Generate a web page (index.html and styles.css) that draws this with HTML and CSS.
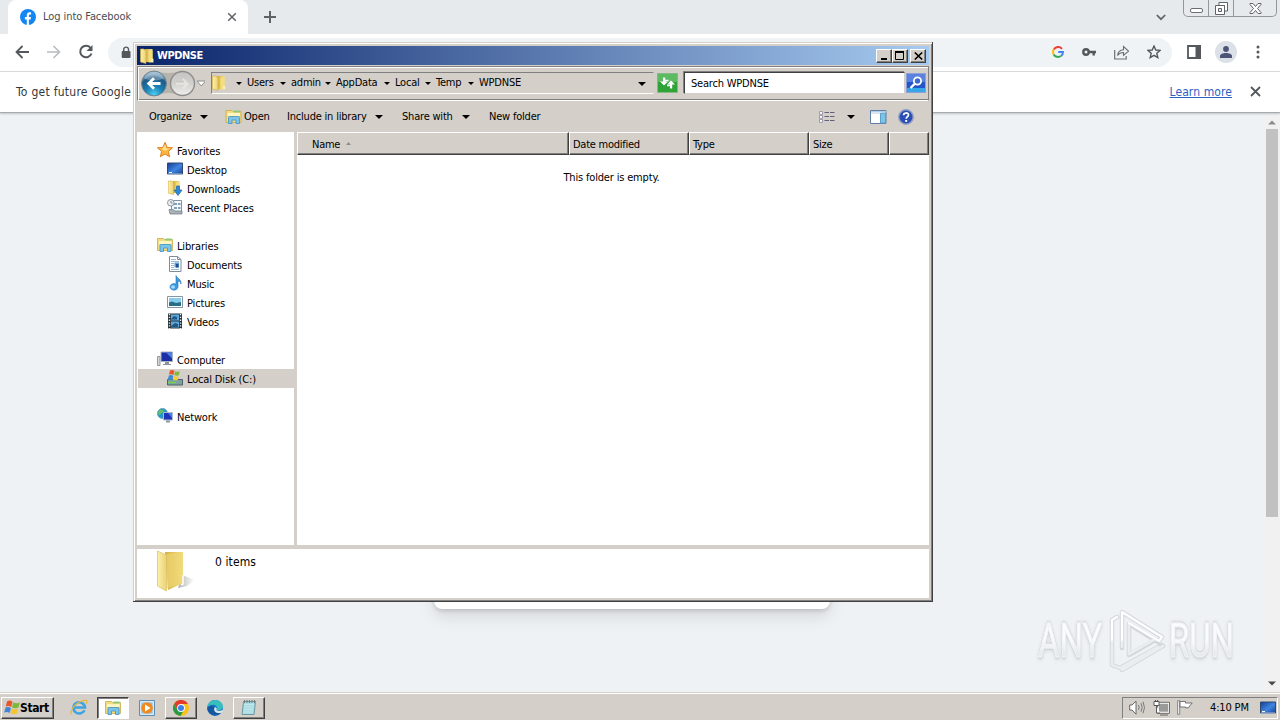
FILE: index.html
```html
<!DOCTYPE html>
<html lang="en">
<head>
<meta charset="utf-8">
<title>Log into Facebook</title>
<link rel="stylesheet" href="styles.css">
</head>
<body>
<svg class="defs" width="0" height="0" aria-hidden="true">
  <defs>
    <linearGradient id="goldBack" x1="0" x2="1"><stop offset="0" stop-color="#d5b044"/><stop offset="1" stop-color="#f3de7c"/></linearGradient>
    <linearGradient id="goldFront" x1="0" x2="1"><stop offset="0" stop-color="#fbf0ac"/><stop offset="1" stop-color="#ecd172"/></linearGradient>
    <linearGradient id="screen" x1="0" y1="0" x2="1" y2="1"><stop offset="0" stop-color="#143c98"/><stop offset=".55" stop-color="#3f86e0"/><stop offset="1" stop-color="#1a4196"/></linearGradient>
    <radialGradient id="orbBlue" cx=".5" cy=".95" r=".9"><stop offset="0" stop-color="#4fd0f4"/><stop offset=".4" stop-color="#1a7fb4"/><stop offset=".75" stop-color="#1f5a86"/><stop offset="1" stop-color="#a9c6d8"/></radialGradient>
    <linearGradient id="orbGrey" x1="0" y1="0" x2="0" y2="1"><stop offset="0" stop-color="#c4c4c4"/><stop offset=".5" stop-color="#d3d1cd"/><stop offset="1" stop-color="#f0efed"/></linearGradient>
    <linearGradient id="shade" x1="0" x2="1"><stop offset="0" stop-color="#777" stop-opacity=".6"/><stop offset="1" stop-color="#999" stop-opacity="0"/></linearGradient>
  </defs>
  <symbol id="folder" viewBox="0 0 16 16"><path d="M6 1h7.500v13H6z" fill="url(#goldBack)"/><path d="M1.500 1H5l2 2v12.500L1.500 14z" fill="url(#goldFront)" stroke="#d2ab3a" stroke-width=".6"/><path d="M9.500 2.500h4V10l1 1v3.500h-5z" fill="#f4df7e"/><path d="M13 11v3" stroke="#fff"/></symbol>
  <symbol id="library" viewBox="0 0 16 16"><path d="M.5 1.500h6l1 1h8v11H.5z" fill="#f3db80" stroke="#c9a84a" stroke-width=".8"/><path d="M8.500 1.500h6v2h-6z" fill="#8cc978"/><path d="M2 4h12.500v3H2z" fill="#fff5bf"/><path d="M3 14.500V8.500q0-1 1-1h9q1 0 1 1v6h-3.500v-3.500h-4v3.500z" fill="#7cc5ea" stroke="#3e92c4" stroke-width=".8"/></symbol>
  <symbol id="monitor" viewBox="0 0 16 16"><path d="M.5 2h15v11H.5z" fill="url(#screen)" stroke="#31486e"/><path d="M1 13h14" stroke="#aac4e0"/><path d="M2 11.500h3" stroke="#fff"/></symbol>
</svg>

<div class="screen">
  <div class="browser">
    <header class="tabstrip">
      <div class="tab">
        <svg class="fb" viewBox="0 0 16 16" width="16" height="16"><circle cx="8" cy="8" r="8" fill="#1386f5"/><path d="M6.800 16v-5.600H4.900V8h1.900V6.400c0-2.100 1.100-3.100 2.900-3.100.6 0 1.100.1 1.400.1v2h-1c-.9 0-1.200.5-1.200 1.200V8h2.100l-.4 2.400H8.900V16z" fill="#fff"/></svg>
        <span class="tab-title">Log into Facebook</span>
        <svg width="10" height="10" viewBox="0 0 10 10"><path d="M1.200 1.200l7.600 7.600M8.800 1.200l-7.600 7.600" stroke="#5f6368" stroke-width="1.500"/></svg>
      </div>
      <svg class="plus" width="12" height="12" viewBox="0 0 12 12"><path d="M6 0v12M0 6h12" stroke="#5f6368" stroke-width="2"/></svg>
      <svg class="tabsearch" width="10" height="7" viewBox="0 0 10 7"><path d="M.8 1L5 5.200 9.200 1" fill="none" stroke="#5f6368" stroke-width="1.700"/></svg>
      <div class="winctl">
        <span><svg class="min" width="13" height="5" viewBox="0 0 13 5"><rect x=".5" y=".5" width="12" height="4" rx="1.500" fill="#fff" stroke="#6b6f75"/></svg></span>
        <span><svg width="13" height="13" viewBox="0 0 13 13"><path d="M4 .5h8.500v8.500h-3V3.500H4z" fill="#fff" stroke="#5f6368"/><path d="M.5 3.500h9v9h-9z" fill="#fff" stroke="#5f6368"/><path d="M3.500 6.500h3v3h-3z" fill="#e7eaed" stroke="#5f6368"/></svg></span>
        <span class="wide"><svg width="13" height="11" viewBox="0 0 13 11"><path d="M1 .5h3l2.500 3L9 .5h3v1L8.500 5.500 12 9.500v1H9l-2.500-3-2.500 3H1v-1l3.500-4L1 1.500z" fill="#fff" stroke="#5f6368"/></svg></span>
      </div>
    </header>
    <div class="toolbar">
      <svg width="14" height="14" viewBox="0 0 14 14"><path d="M14 7H1.500M7.500 1L1.500 7l6 6" fill="none" stroke="#54585d" stroke-width="1.800"/></svg>
      <svg width="14" height="14" viewBox="0 0 14 14"><path d="M0 7h12.500M6.500 1l6 6-6 6" fill="none" stroke="#b9bcbf" stroke-width="1.600"/></svg>
      <svg class="reload" width="16" height="16" viewBox="0 0 16 16"><path d="M12.800 4.200A5.800 5.800 0 1 0 13.500 9.500" fill="none" stroke="#54585d" stroke-width="2"/><path d="M14.500 1v6h-6z" fill="#54585d"/></svg>
      <div class="omnibox">
        <svg class="lock" width="10" height="13" viewBox="0 0 10 13"><rect x=".7" y="5" width="8.800" height="7" rx="1" fill="#54585d"/><path d="M2.700 5V3.500a2.400 2.400 0 0 1 4.800 0V5" fill="none" stroke="#54585d" stroke-width="1.400"/></svg>
        <svg class="g" width="12" height="12" viewBox="0 0 12 12"><g fill="none" stroke-width="2"><path d="M10 2.800A5 5 0 0 0 1.700 3.600" stroke="#ea4335"/><path d="M1.700 3.600a5 5 0 0 0 0 4.800" stroke="#fbbc05"/><path d="M1.700 8.400A5 5 0 0 0 9 10" stroke="#34a853"/><path d="M9 10a5 5 0 0 0 2-4H6.200" stroke="#4285f4"/></g></svg>
        <svg width="14" height="8" viewBox="0 0 14 8"><circle cx="4" cy="4" r="2.700" fill="none" stroke="#54585d" stroke-width="2.400"/><path d="M7 4h7M11.700 4v3.500" fill="none" stroke="#54585d" stroke-width="2.400"/></svg>
        <svg width="15" height="15" viewBox="0 0 15 15"><path d="M.7 5v9h11.500v-3" fill="none" stroke="#6b6f75" stroke-width="1.200"/><path d="M3.500 10.500c.5-4 2.500-5.500 6-5.700V1.500l5 4.600-5 4.300V7.500c-3 0-4.700 1-6 3z" fill="none" stroke="#6b6f75" stroke-width="1.100"/></svg>
        <svg width="14" height="14" viewBox="0 0 14 14"><path d="M7 1l1.800 4 4.300.4-3.300 2.900 1 4.300L7 10.300l-3.800 2.300 1-4.300L.9 5.400 5.200 5z" fill="none" stroke="#54585d" stroke-width="1.400"/></svg>
      </div>
      <svg class="panel" width="14" height="14" viewBox="0 0 14 14"><path d="M1 1h12v12H1z" fill="#fff" stroke="#54585d" stroke-width="1.800"/><path d="M8.500 0H14v14H8.500z" fill="#54585d"/></svg>
      <span class="avatar"><svg width="12" height="12" viewBox="0 0 12 12"><circle cx="6" cy="3" r="2.900" fill="#4c5577"/><path d="M0 12v-2c0-2 3-3 6-3s6 1 6 3v2z" fill="#4c5577"/></svg></span>
      <svg class="menu" width="4" height="14" viewBox="0 0 4 14"><g fill="#54585d"><circle cx="2" cy="2" r="1.500"/><circle cx="2" cy="7" r="1.500"/><circle cx="2" cy="12" r="1.500"/></g></svg>
    </div>
    <div class="infobar">
      <span class="info-text">To get future Google</span>
      <a class="learn">Learn more</a>
      <svg width="11" height="11" viewBox="0 0 11 11"><path d="M1 1l9 9M10 1l-9 9" stroke="#54585d" stroke-width="1.800"/></svg>
    </div>
    <div class="page">
      <div class="page-body"><div class="card"></div></div>
      <div class="scrollbar">
        <svg width="8" height="5" viewBox="0 0 8 5"><path d="M0 4.500L4 .5l4 4z" fill="#8c8c8c"/></svg>
        <i class="thumb"></i>
        <svg width="8" height="5" viewBox="0 0 8 5"><path d="M0 .5h8l-4 4z" fill="#4a4a4a"/></svg>
      </div>
    </div>
  </div>

  <div class="watermark">
    <span class="wm any">ANY</span>
    <svg width="58" height="64" viewBox="0 0 58 64"><g fill="none" stroke-linejoin="round" stroke-linecap="round"><path d="M9 9L4 12v45l8 3 42-23M14 40V4l40 25-4 5-29-18v31l26-15M14 62l41-24" stroke="#d2d6da" stroke-width="4.500"/><path d="M9 9L4 12v45l8 3 38-21M14 39V4l40 25-3 4-30-18v31l26-15M14 62l41-24" stroke="#e9edf0" stroke-width="2.800"/><path d="M9 9L4 12v20M14 32V4l40 25-3 4-30-18" stroke="#fff" stroke-width="2"/></g></svg>
    <span class="wm run">RUN</span>
  </div>

  <section class="explorer">
    <div class="titlebar">
      <svg width="16" height="16"><use href="#folder"/></svg>
      <b>WPDNSE</b>
      <span class="cap first"><svg width="8" height="8" viewBox="0 0 8 8"><path d="M1 6h6v2H1z"/></svg></span>
      <span class="cap"><svg width="10" height="9" viewBox="0 0 10 9"><path d="M.5 1h8v7.500h-8z" fill="none" stroke="#000"/><path d="M0 0h9v2H0z"/></svg></span>
      <span class="cap last"><svg width="9" height="8" viewBox="0 0 9 8"><path d="M.8.5l7.400 7M8.200.5l-7.400 7" stroke="#000" stroke-width="1.600"/></svg></span>
    </div>
    <div class="navband">
      <svg class="orbs" width="67" height="30" viewBox="0 0 67 30">
        <path d="M16 2.500q14 5 28 0v25q-14-5-28 0z" fill="#b7b4ae"/>
        <circle cx="16" cy="15.500" r="12.400" fill="url(#orbBlue)" stroke="#70818c"/><path d="M6 10.500a11 9 0 0 1 20 0q-10 4-20 0z" fill="#fff" opacity=".28"/><path d="M22.500 15.500h-11M16 10.200l-5.300 5.300 5.300 5.300" fill="none" stroke="#fff" stroke-width="2.800"/>
        <circle cx="44.500" cy="15.500" r="12" fill="url(#orbGrey)" stroke="#8d8d8d" stroke-width="1.400"/><path d="M38 15.500h11M45 10.700l4.800 4.800-4.800 4.800" fill="none" stroke="#e6e5e2" stroke-width="2.600"/><path d="M38 14h8M45 9l6 6.500" fill="none" stroke="#bdbbb7" stroke-width=".7"/>
        <path d="M59 13h8.500l-4.200 5z" fill="#fff" stroke="#858585" stroke-width=".9"/>
      </svg>
      <div class="address">
        <svg class="afold" width="16" height="16"><use href="#folder"/></svg>
        <i class="dn c0"></i><span class="w1">Users</span><i class="dn"></i><span class="w2">admin</span><i class="dn"></i><span class="w3">AppData</span><i class="dn"></i><span class="w4">Local</span><i class="dn"></i><span class="w5">Temp</span><i class="dn"></i><span class="w6">WPDNSE</span>
        <i class="dn big"></i>
      </div>
      <svg class="refresh" width="21" height="20" viewBox="0 0 21 20"><path d="M.5.500h20v19H.5z" fill="#2fa336" stroke="#86b886"/><path d="M1 1h19v8H1z" fill="#7cc97d" opacity=".6"/><path d="M6 4.500h2.200v4H11L7 12.500 3 8.500h3z" fill="#fff"/><path d="M13 15.500h2.200v-4H18L14 7.500l-4 4h3z" fill="#fff"/><path d="M8 7.500h3.500M10 12.500h3" stroke="#fff" stroke-width="1.500"/></svg>
      <div class="search">Search WPDNSE</div>
      <svg width="20" height="20" viewBox="0 0 20 20"><path d="M.5.500h19v19H.5z" fill="#2455c8" stroke="#8ba0d8"/><path d="M1 1h18v8H1z" fill="#5b82de"/><path d="M1 15h18v4H1z" fill="#38a7e8"/><circle cx="11.500" cy="8" r="3.600" fill="#3c69cf" stroke="#fff" stroke-width="1.800"/><path d="M9 10.500L4.500 15" stroke="#fff" stroke-width="2.400"/></svg>
    </div>
    <div class="commands">
      <span class="k1">Organize</span><i class="dn big"></i>
      <svg class="openi" width="17" height="16"><use href="#library"/></svg><span class="k2">Open</span>
      <span class="k3">Include in library</span><i class="dn big"></i>
      <span class="k4">Share with</span><i class="dn big"></i>
      <span class="k5">New folder</span>
      <svg class="views" width="16" height="12" viewBox="0 0 16 12"><g fill="#fff" stroke="#8a87a0" stroke-width=".8"><path d="M.5.500h3v2.800h-3zM.5 4.500h3v2.800h-3zM.5 8.500h3v2.800h-3z"/></g><path d="M5.500 1.500H10M11 1.500h4.500M5.500 5.500H10M11 5.500h4.500M5.500 9.500H10M11 9.500h4.500" stroke="#625f7a"/></svg>
      <i class="dn big"></i>
      <svg class="preview" width="17" height="14" viewBox="0 0 17 14"><path d="M.5.500h15.500v13H.5z" fill="#fff" stroke="#5e7fa8"/><path d="M1 1.500h15M1 3h9" stroke="#b5cae3"/><path d="M10.500 3h5v10h-5z" fill="#7cc3e6" stroke="#5aa0c8"/></svg>
      <svg class="help" width="16" height="16" viewBox="0 0 16 16"><circle cx="8" cy="8" r="7.200" fill="#2a4fb4" stroke="#8f9bc4" stroke-width="1.500"/><path d="M5.600 6.300C5.600 3.200 10.600 3.300 10.500 6c0 1.700-2.300 1.700-2.300 3.800" fill="none" stroke="#fff" stroke-width="1.700"/><path d="M7.200 11h2v1.900h-2z" fill="#fff"/></svg>
    </div>
    <div class="panes">
      <nav class="tree">
        <div class="row top"><svg viewBox="0 0 16 16"><path d="M8 .3l2.100 5 5.500.5-4.200 3.600 1.300 5.400L8 12l-4.700 2.800 1.300-5.400L.4 5.800l5.500-.5z" fill="#fbb540" stroke="#d87a1c" stroke-width=".9"/><path d="M8 2.500l1.200 4h3.500L8 9 5 7z" fill="#fde08d"/></svg><span>Favorites</span></div>
        <div class="row"><svg><use href="#monitor"/></svg><span>Desktop</span></div>
        <div class="row"><svg viewBox="0 0 16 16"><use href="#folder" width="15" height="15" x="0"/><path d="M9.500 6h3v4H15l-4 5.500L7 10h2.500z" fill="#2e8ad8" stroke="#1a65ac" stroke-width=".7"/></svg><span>Downloads</span></div>
        <div class="row"><svg viewBox="0 0 16 16"><path d="M4.500 1.500h10v11h-10z" fill="#f4f7f9" stroke="#84949f"/><path d="M7 4h3v2H7zM11 4h2.500v2H11zM7 8h3v2H7zM11 8h2.500v2H11z" fill="#7f9fb5"/><circle cx="3.800" cy="3.800" r="3.300" fill="#e8eef2" stroke="#8b98a2"/><path d="M4 2v2h1.500" fill="none" stroke="#67737c" stroke-width=".8"/><path d="M2 10.500h4l2 1.500h7v3H3z" fill="#a9b3ba" stroke="#6c777f" stroke-width=".7"/></svg><span>Recent Places</span></div>
        <div class="row top gap"><svg><use href="#library"/></svg><span>Libraries</span></div>
        <div class="row"><svg viewBox="0 0 16 16"><path d="M2.500.500h8l3.500 3v12H2.500z" fill="#fff" stroke="#7c8c9b"/><path d="M10.500.500v3H14" fill="none" stroke="#7c8c9b"/><path d="M4 3.500h5M4 5.500h8M4 7.500h3M4 9.500h3M4 11.500h3M4 13.500h8" stroke="#9db8cf"/><path d="M7.500 6.500h4.500v5H7.500z" fill="#5e9ad0" /><path d="M9 8h2.500v3.500H9z" fill="#1f4f90"/></svg><span>Documents</span></div>
        <div class="row"><svg viewBox="0 0 16 16"><path d="M9 .500c1 3 5.500 3.500 5 8.500-.5-2-1.500-3-3-3v6A4 3.300 0 1 1 9 9z" fill="#3a9be0" stroke="#1f72ba" stroke-width=".6"/><ellipse cx="6" cy="12" rx="2" ry="1.700" fill="#a3d8f8"/></svg><span>Music</span></div>
        <div class="row"><svg viewBox="0 0 16 16"><path d="M.5 2.500h15v11H.5z" fill="#fff" stroke="#8496a5"/><path d="M2 4h12v8H2z" fill="#89cbea"/><path d="M2 8.500l3-1 4 1.500 5-1v4H2z" fill="#286d86"/></svg><span>Pictures</span></div>
        <div class="row"><svg viewBox="0 0 16 16"><path d="M1 .500h14v15H1z" fill="#26323c"/><path d="M2.500 1v15M13.500 1v15" stroke="#e4edf3" stroke-width="1.400" stroke-dasharray="1.300 1.500"/><path d="M4 1.500h8v6H4zM4 8.500h8v6H4z" fill="#5ca7dc"/><path d="M4 6l3-3 3 1v2.500H4zM4 13l4-3 3 1v3H4z" fill="#24567f"/></svg><span>Videos</span></div>
        <div class="row top gap"><svg viewBox="0 0 16 16"><path d="M.5 5.500h2.500v9H.5z" fill="#d5d8db" stroke="#81878c" stroke-width=".8"/><path d="M4 1h11.500v9.500H4z" fill="#1b2fa6" stroke="#aab3bd"/><path d="M9 1.500h6v6z" fill="#4e80ea"/><path d="M8 11h4v2h2v1H6v-1h2z" fill="#8d959c"/></svg><span>Computer</span></div>
        <div class="row sel"><svg viewBox="0 0 16 16"><path d="M.5 9.500h15v5.500H.5z" fill="#7fa09f" stroke="#4e656b"/><path d="M1 12.500h8" stroke="#6fd452" stroke-width="1.500"/><path d="M3 .5q2.500-1 4.500.5L6.500 5Q4.500 3.600 2 4.600z" fill="#e9562c"/><path d="M8.300 1.300q2.200 1 4.500 0l-1 4q-2.200 1-4.500-.3z" fill="#7cbc3a"/><path d="M1.800 5.500q2.500-1 4.500.4L5.300 10.200.8 9.500z" fill="#3c8bd8"/><path d="M7 6q2.300 1.200 4.500.3l-1 3.900H6z" fill="#f9cb35"/></svg><span>Local Disk (C:)</span></div>
        <div class="row top gap"><svg viewBox="0 0 16 16"><circle cx="5.500" cy="5.500" r="5" fill="#2498c8" stroke="#63a6b8"/><path d="M3 1.500q4 0 4 2L4 5.500 2 7.500 1 4.500z" fill="#66bd65"/><path d="M6.500 4.500h9v7.500h-9z" fill="#1d35ba" stroke="#aeb9c9"/><path d="M11 5h4v5z" fill="#4d7eec"/><path d="M9 12.500h4v2H9z" fill="#8d98a4"/></svg><span>Network</span></div>
      </nav>
      <div class="list">
        <div class="cols"><span class="n">Name<svg width="5" height="3" viewBox="0 0 5 3"><path d="M0 3L2.500 0 5 3z" fill="#918d86"/></svg></span><span class="d">Date modified</span><span class="t">Type</span><span class="s">Size</span><span class="r"></span></div>
        <p class="empty">This folder is empty.</p>
      </div>
    </div>
    <div class="details">
      <svg width="40" height="44" viewBox="0 0 40 44"><path d="M26 25l13 5-8 6-9 2z" fill="url(#shade)"/><path d="M9 2h18v31l-15 7z" fill="url(#goldBack)"/><path d="M1.500 1l9 4v36l-9-5z" fill="url(#goldFront)" stroke="#d9bf61" stroke-width=".7"/><path d="M11 4l16-2v31l-16 5z" fill="#f0d878" opacity=".6"/><path d="M27 25v9l-2 1" fill="none" stroke="#fff" stroke-width="1.500"/></svg>
      <span>0 items</span>
    </div>
  </section>

  <footer class="taskbar">
    <div class="start"><svg width="16" height="15" viewBox="0 0 16 15"><path d="M3 1.500q3-2 5.500.2L7.200 7Q4.500 5.200 1.800 6.600z" fill="#e8572a"/><path d="M9.300 2.300q3 1.800 6.500.1l-1.300 5q-3.500 1.600-6.500 0z" fill="#7db83c"/><path d="M1.600 7.500q2.700-1.300 5.300.4L5.700 13Q3 11.200.2 12.500z" fill="#3f86d4"/><path d="M7.800 8.400q3.200 1.700 6.300.1l-1.300 5q-3.200 1.500-6.200 0z" fill="#f6c42e"/></svg><b>Start</b></div>
    <span class="task plain"><svg width="18" height="17" viewBox="0 0 18 17"><path d="M14.500 11.200A5.800 5.600 0 1 1 15 8.500H4.500" fill="none" stroke="#3fa4e4" stroke-width="2.600"/><path d="M1.500 15.500C-1 11 8 1 16 1.300c1.500.4 1 2.500.3 3.500" fill="none" stroke="#eab93a" stroke-width="1.300"/></svg></span>
    <span class="task active"><svg width="16" height="16"><use href="#library"/></svg></span>
    <span class="task plain"><svg width="16" height="16" viewBox="0 0 16 16"><path d="M.5.500h15v15H.5z" fill="#d7e8f5" stroke="#5f8db5"/><path d="M2.500 2.500h11v11h-11z" fill="#8ac0e4"/><circle cx="8" cy="8" r="5.800" fill="#f08a1e"/><path d="M6 4.500l5.500 3.500L6 11.500z" fill="#fff"/></svg></span>
    <span class="task up"><svg width="16" height="16" viewBox="0 0 16 16"><circle cx="8" cy="8" r="8" fill="#fbc116"/><path d="M1 4a8 8 0 0 1 14 0H8L4.500 10z" fill="#e33b2e"/><path d="M1 4a8 8 0 0 0 6.500 12L11 10H4.600z" fill="#2b9a48"/><circle cx="8" cy="8" r="3.900" fill="#fff"/><circle cx="8" cy="8" r="3" fill="#3f7fe8"/></svg></span>
    <span class="task plain"><svg width="16" height="16" viewBox="0 0 16 16"><circle cx="8" cy="8" r="7.900" fill="#1b6fc4"/><path d="M.2 8C1 3 4 .1 8 .1c5 0 8 3.400 7.900 6.500C15.700 10 11 11.500 9.300 10c1-1.500 1-5-3-5.200C3.500 4.700 1 6 .2 8z" fill="#37bfc0"/><path d="M9.300 10c1.500 1.300 4 1 5.500.2l1.200.300v1.500c-2.500 1.500-5 1.700-7 .4-2-1-2.500-3.500-1-5.400 2 .8 2 1.900 1.300 3z" fill="#dfe6e6"/><path d="M.2 8c2-3 6-3 7 0-1.500 3 1 5.500 6.500 5A8 8 0 0 1 .2 8z" fill="#15589f"/></svg></span>
    <span class="task up"><svg width="16" height="17" viewBox="0 0 16 17"><path d="M2.500 2.500h12l-1.500 13H1z" fill="#a9dbe2" stroke="#6d98a0"/><path d="M3 5.500h10M3 8h10M3 10.500h9M2 13h10" stroke="#cdeef2" stroke-width=".7"/><path d="M3.500 1v3M6 1v3M8.500 1v3M11 1v3M13.500 1v3" stroke="#707a7d"/></svg></span>
    <div class="tray">
      <svg width="17" height="15" viewBox="0 0 17 15"><path d="M.7 5H3l4-3.800v13L3 10H.7z" fill="#fff" stroke="#55595c" stroke-width=".9"/><path d="M9.500 5q1.300 2.500 0 5M12 3.200q2.300 4.300 0 8.600M14 1.700q3 6 0 11.600" fill="none" stroke="#77797b"/></svg>
      <svg width="17" height="16" viewBox="0 0 17 16"><path d="M5 3h11v9.500H5z" fill="#9a9a98" stroke="#fff" stroke-width="1.500"/><path d="M4.500 2.300h12v11h-12zM7 15h8" fill="none" stroke="#4c4c4c" stroke-width=".8"/><path d="M1 1.500v4h5v-4zM2.500 0v2M4.500 0v2M3.500 5.500V13H7" fill="#fff" stroke="#4c4c4c" stroke-width=".9"/></svg>
      <svg width="16" height="15" viewBox="0 0 16 15"><path d="M.7.700h2v13.600h-2z" fill="#fff" stroke="#66686a" stroke-width=".8"/><path d="M3 1.500h5.500V3h6.700L13 5.500l-1.500 2.300h-3V7H3z" fill="#fff" stroke="#66686a" stroke-width=".9"/></svg>
      <time>4:10 PM</time>
      <svg width="16" height="16"><use href="#monitor"/></svg>
    </div>
  </footer>
</div>
</body>
</html>
```
FILE: styles.css
```css
* { box-sizing: border-box; }
body { margin: 0; font: 11px/14px "DejaVu Sans Condensed", "DejaVu Sans", sans-serif; font-stretch: condensed; color: #000; overflow: hidden; }
svg { display: block; flex: none; }
.defs { position: absolute; }
i { flex: none; }
.screen { position: relative; width: 1280px; height: 720px; display: flex; flex-direction: column; background: #d4cfc8; }

/* browser */
.browser { height: 692px; display: flex; flex-direction: column; background: #eef2f5; }
.tabstrip { height: 34px; flex: none; display: flex; background: #e7eaed; align-items: center; }
.tab { width: 240px; height: 34px; margin-left: 8px; padding: 0 11px 0 12px; display: flex; align-items: center; background: #fff; border-radius: 8px 8px 0 0; }
.tab-title { flex: 1; margin: 0 0 0 7px; color: #4a4e52; letter-spacing: -.07px; }
.plus { margin-left: 16px; }
.tabsearch { margin-left: auto; }
.winctl { align-self: flex-start; width: 94px; height: 17px; margin: 0 3px 0 17px; display: flex; border: 1px solid #92979c; border-top: 0; border-radius: 0 0 5px 5px; }
.winctl span { width: 25px; display: flex; justify-content: center; align-items: center; border-right: 1px solid #92979c; }
.winctl .min { margin-top: 4px; }
.winctl .wide { width: 42px; border: 0; }
.toolbar { height: 38px; flex: none; display: flex; align-items: center; gap: 18px; padding: 0 20px 1px 15px; background: #fff; border-bottom: 1px solid #d9dbdd; }
.reload { margin: 0 1px 0 -1px; }
.omnibox { flex: 1; height: 29px; margin-left: -5px; border-radius: 15px; background: #f0f3f5; display: flex; align-items: center; gap: 18px; padding: 0 11px 0 13px; }
.lock { margin-right: auto; }
.panel { margin-left: -3px; }
.avatar { width: 22px; height: 22px; margin-left: -4px; border-radius: 50%; background: #dce1e7; display: flex; align-items: center; justify-content: center; }
.toolbar .menu { margin-left: 1px; }
.infobar { height: 41px; flex: none; display: flex; align-items: center; padding: 0 19px 1px 16px; background: #fff; border-bottom: 1px solid #a7abae; box-shadow: 0 1px 2px #bfc3c6; z-index: 1; font-size: 12px; }
.info-text { color: #33373a; letter-spacing: .27px; white-space: nowrap; }
.learn { margin-left: auto; margin-right: 18px; color: #2a62c4; text-decoration: underline; letter-spacing: .1px; }
.page { flex: 1; display: flex; background: #eff2f5; }
.page-body { flex: 1; display: flex; justify-content: center; padding-bottom: 83px; }
.card { width: 396px; background: #fff; border-radius: 8px; box-shadow: 0 2px 4px rgba(0,0,0,.14), 0 8px 16px rgba(0,0,0,.1); }
.scrollbar { width: 16px; display: flex; flex-direction: column; align-items: center; padding: 7px 0 6px; background: #f1f1f1; }
.thumb { width: 12px; height: 388px; margin: 4px 0 auto; background: #c1c1c1; }

.watermark { position: absolute; left: 1038px; top: 608px; display: flex; align-items: center; }
.wm { display: flex; width: 96px; font: 49px/60px Roboto, sans-serif; color: transparent; background: linear-gradient(#f9fbfc 50%, #e8ebee 70%); -webkit-background-clip: text; background-clip: text; filter: drop-shadow(0 0 1px #babfc4) drop-shadow(0 1px 2px #cfd3d7); -webkit-text-stroke: 1px #f0f3f5; transform: scaleX(.67); transform-origin: 0 50%; white-space: nowrap; padding-top: 2px; }
.any { margin-right: -26px; }
.run { margin-left: 3px; }

/* explorer window */
.explorer { position: absolute; left: 133px; top: 42px; width: 800px; height: 560px; padding: 3px 3px 3px 4px; display: flex; flex-direction: column; background: #d4cfc8; border-right: 1px solid #404040; border-bottom: 1px solid #404040; box-shadow: inset 1px 1px #d4d0c8, inset 2px 2px #fff, inset -1px -1px #808080; z-index: 2; }
.titlebar { height: 19px; flex: none; margin-top: 1px; display: flex; align-items: center; padding: 0 3px 0 2px; background: linear-gradient(90deg, #0a246a, #a6caf0); color: #fff; }
.titlebar b { margin-left: 2px; font: bold 11px/18px "DejaVu Sans Condensed", sans-serif; letter-spacing: -.45px; }
.cap { width: 16px; height: 14px; display: flex; align-items: center; justify-content: center; background: #d4cfc8; border: 1px solid; border-color: #fff #404040 #404040 #fff; box-shadow: inset -1px -1px #808080; }
.cap.first { margin-left: auto; }
.cap.last { margin-left: 2px; }
.navband { height: 35px; flex: none; display: flex; align-items: center; margin-top: 1px; padding: 0 2px 1px 0; border: 1px solid #808080; border-color: #808080 #808080 #fff #808080; box-shadow: inset 1px 1px #fff, inset 0 -1px #808080; }
.orbs { margin: 0 6px 0 0; }
.address { width: 443px; height: 22px; flex: none; display: flex; align-items: center; border: 1px solid; border-color: #808080 #d4cfc8 #fff #808080; letter-spacing: -.22px; white-space: nowrap; }
.afold { margin-left: -1px; }
.dn { width: 0; height: 0; border: 3px solid transparent; border-top: 3px solid #000; border-bottom: 0; margin: 1px 5px 0 5px; }
.dn.big { border-width: 4px 4px 0; margin: 0; }
.dn.c0 { margin-left: 9px; margin-right: 5px; }
.address .dn.big { margin: 1px 7px 0 auto; }
.w1 { width: 28px; } .w2 { width: 29px; } .w3 { width: 43px; } .w4 { width: 25px; } .w5 { width: 27px; } .w6 { width: 44px; }
.refresh { margin-left: 3px; }
.search { flex: 1; height: 22px; margin: 0 1px 0 6px; padding: 4px 6px; background: #fff; border: 1px solid #fff; border-color: #404040 #d4cfc8 #d4cfc8 #404040; box-shadow: -1px -1px #808080; letter-spacing: -.2px; }
.commands { height: 31px; flex: none; display: flex; align-items: center; padding: 0 15px 0 12px; letter-spacing: -.2px; white-space: nowrap; }
.k1 { width: 51px; } .k2 { width: 43px; margin-left: 2px; } .k3 { width: 88px; } .k4 { width: 60px; margin-left: 19px; } .k5 { margin-left: 19px; }
.openi { margin-left: 17px; }
.views { margin: 0 12px 0 auto; }
.preview { margin-left: 15px; }
.help { margin-left: 11px; }
.panes { height: 413px; flex: none; display: flex; }
.tree { width: 157px; flex: none; padding-top: 9px; background: #fff; }
.row { height: 19px; display: flex; align-items: center; gap: 4px; padding-left: 30px; letter-spacing: -.15px; }
.row span { margin-top: 3px; }
.row.top { padding-left: 20px; }
.row.gap { margin-top: 19px; }
.row svg { width: 16px; height: 16px; margin-top: -1px; }
.row.sel { margin-left: 1px; padding-left: 29px; background: #d4cfc8; }
.list { flex: 1; margin-left: 3px; background: #fff; }
.cols { height: 23px; display: flex; }
.cols span { padding: 5px 3px 0; background: #d4cfc8; border: 1px solid; border-color: #fff #404040 #404040 #fff; box-shadow: inset -1px -1px #808080; letter-spacing: -.25px; }
.cols .n { width: 272px; padding-left: 14px; display: flex; gap: 6px; }
.cols .n svg { margin-top: 4px; }
.cols .d { width: 120px; } .cols .t { width: 120px; } .cols .s { width: 80px; } .cols .r { flex: 1; }
.empty { margin: 16px 3px 0 0; text-align: center; letter-spacing: -.17px; }
.details { height: 49px; flex: none; margin-top: 4px; padding: 1px 0 0 19px; display: flex; background: #fff; font-size: 12px; }
.details span { margin: 5px 0 0 19px; letter-spacing: .1px; }

/* taskbar */
.taskbar { height: 28px; display: flex; align-items: center; padding: 2px 2px 0 1px; background: #d4cfc8; border-top: 1px solid #d4cfc8; box-shadow: inset 0 1px #fff; }
.start, .task.up { background: #d4cfc8; border: 1px solid; border-color: #fff #404040 #404040 #fff; box-shadow: inset -1px -1px #808080; }
.start { width: 53px; height: 22px; padding: 0 1px 0 2px; display: flex; align-items: center; margin-right: 9px; }
.start b { font: bold 12px/16px "DejaVu Sans Condensed", sans-serif; letter-spacing: -.4px; }
.task { width: 32px; height: 22px; display: flex; align-items: center; justify-content: center; }
.task + .task { margin-left: 2px; }
.task.active { background: #fff; border: 1px solid; border-color: #404040 #fff #fff #404040; box-shadow: inset 1px 1px #808080; }
.tray { width: 156px; height: 22px; margin-left: auto; padding: 0 0 0 6px; display: flex; align-items: center; gap: 7px; border: 1px solid; border-color: #808080 #fff #fff #808080; }
.tray time { margin: 0 4px 0 10px; letter-spacing: -.15px; white-space: nowrap; }
```
